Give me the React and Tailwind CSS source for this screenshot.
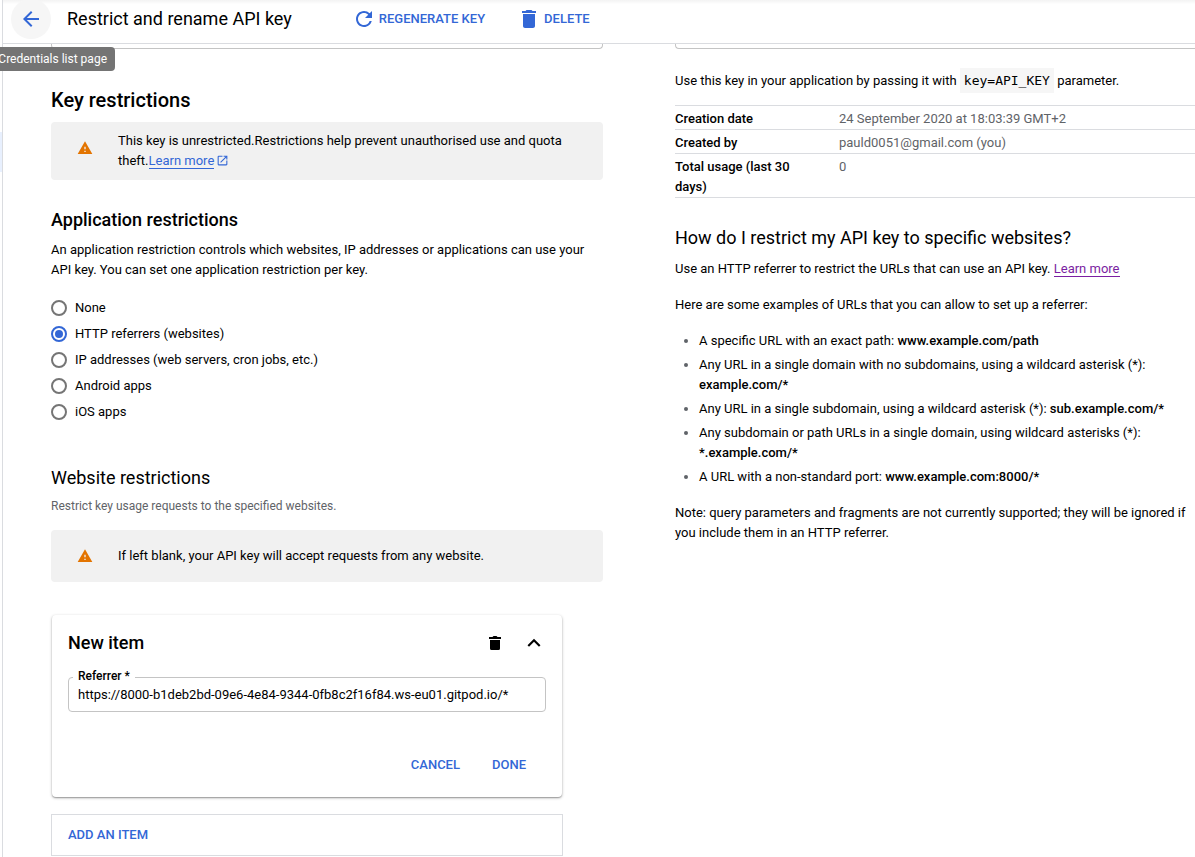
import { useState } from 'react';
import { MdArrowBack, MdDelete, MdExpandLess, MdOpenInNew, MdRefresh, MdWarning } from 'react-icons/md';

const restrictionTypes = [
  'None',
  'HTTP referrers (websites)',
  'IP addresses (web servers, cron jobs, etc.)',
  'Android apps',
  'iOS apps',
];

const details = [
  ['Creation date', '24 September 2020 at 18:03:39 GMT+2'],
  ['Created by', 'pauld0051@gmail.com (you)'],
  ['Total usage (last 30 days)', '0'],
];

const examples = [
  ['A specific URL with an exact path:', 'www.example.com/path'],
  ['Any URL in a single domain with no subdomains, using a wildcard asterisk (*):', 'example.com/*'],
  ['Any URL in a single subdomain, using a wildcard asterisk (*):', 'sub.example.com/*'],
  ['Any subdomain or path URLs in a single domain, using wildcard asterisks (*):', '*.example.com/*'],
  ['A URL with a non-standard port:', 'www.example.com:8000/*'],
];

function Header() {
  return (
    <header className="flex h-11 items-center border-b border-[#dadce0] bg-linear-to-b from-[#f3f3f3] to-white to-10% pb-[6px] pl-2">
      <div className="relative flex">
        <button
          type="button"
          aria-label="Back"
          aria-describedby="back-tip"
          className="flex size-10 items-center justify-center rounded-full bg-[#f6f6f6] text-[#3367d6]"
        >
          <MdArrowBack size={24} />
        </button>
        <span
          id="back-tip"
          role="tooltip"
          className="absolute top-12 right-[-64px] rounded-r bg-[#747474] py-1 pr-2 pl-2 text-[12px] leading-4 whitespace-nowrap text-white"
        >
          Credentials list page
        </span>
      </div>
      <h1 className="ml-4 text-[18px] leading-6">Restrict and rename API key</h1>
      <button type="button" className="ml-15 flex items-center gap-[3px] text-[13px] font-medium text-[#3367d6]">
        <MdRefresh size={24} />
        REGENERATE KEY
      </button>
      <button type="button" className="ml-8 flex items-center gap-[3px] text-[13px] font-medium text-[#3367d6]">
        <MdDelete size={24} />
        DELETE
      </button>
    </header>
  );
}

function Notice({ children, className }) {
  return (
    <div role="note" className={`flex items-start rounded bg-[#f1f1f1] pr-8 pl-[26px] ${className}`}>
      <MdWarning size={16} className="mt-[18px] shrink-0 text-[#e37400]" />
      <p className="ml-[25px] self-center">{children}</p>
    </div>
  );
}

function ReferrerCard() {
  const [referrer, setReferrer] = useState('https://8000-b1deb2bd-09e6-4e84-9344-0fb8c2f16f84.ws-eu01.gitpod.io/*');
  return (
    <section className="mt-[33px] mr-[41px] ml-px rounded bg-white p-4 shadow-[0_1px_3px_rgba(0,0,0,0.3),0_1px_1px_rgba(0,0,0,0.2)]">
      <div className="flex h-6 items-center">
        <h3 className="mr-auto text-[18px] leading-6 font-medium">New item</h3>
        <button type="button" aria-label="Delete item" className="mr-4">
          <svg viewBox="0 0 12 14" width="12" height="14" fill="currentColor" className="mx-1">
            <path d="M0 1h3.500l1-1h3l1 1H12v2H0zM1 4h10v8.500A1.500 1.500 0 0 1 9.500 14h-7A1.500 1.500 0 0 1 1 12.500z" />
          </svg>
        </button>
        <button type="button" aria-label="Collapse item" className="-mr-px">
          <MdExpandLess size={26} />
        </button>
      </div>
      <div className="relative mt-[22px]">
        <label
          htmlFor="referrer"
          className="absolute -top-[7px] left-[5px] bg-white px-[5px] text-[12px] leading-3 font-medium"
        >
          Referrer *
        </label>
        <input
          id="referrer"
          type="text"
          value={referrer}
          onChange={(e) => setReferrer(e.target.value)}
          className="block h-[35px] w-full rounded border border-[#c4c4c4] px-[9px] outline-none"
        />
      </div>
      <div className="mt-[43px] mb-[6px] flex justify-end gap-8 pr-5 font-medium text-[#3367d6]">
        <button type="button">CANCEL</button>
        <button type="button">DONE</button>
      </div>
    </section>
  );
}

function RestrictionsForm() {
  const [selected, setSelected] = useState(restrictionTypes[1]);
  return (
    <form>
      <div className="h-[5px] rounded-b border border-t-0 border-[#c4c4c4]" />
      <h2 className="mt-[39px] text-[20px] leading-6 font-medium">Key restrictions</h2>
      <Notice className="mt-[10px] min-h-[58px]">
        This key is unrestricted.Restrictions help prevent unauthorised use and quota theft.
        <a href="#keys" className="text-[#3367d6]">
          <span className="border-b border-current">Learn more</span>
          <MdOpenInNew size={13} className="ml-0.5 inline align-[-2px]" />
        </a>
      </Notice>
      <fieldset className="mt-7">
        <legend className="text-[18px] leading-6 font-medium">Application restrictions</legend>
        <p className="mt-2">
          An application restriction controls which websites, IP addresses or applications can use your API key. You can
          set one application restriction per key.
        </p>
        <div className="mt-[15px] flex flex-col items-start">
          {restrictionTypes.map((type) => (
            <label key={type} className="flex h-[26px] items-center gap-2">
              <input
                type="radio"
                name="restriction"
                checked={selected === type}
                onChange={() => setSelected(type)}
                className="size-4 appearance-none rounded-full border-2 border-[#757575] checked:border-[#3367d6] checked:bg-[#3367d6] checked:bg-clip-content checked:p-[2px]"
              />
              {type}
            </label>
          ))}
        </div>
      </fieldset>
      <h2 className="mt-[41px] text-[18px] leading-6">Website restrictions</h2>
      <p className="mt-[6px] text-[12px] text-[#5f6368]">Restrict key usage requests to the specified websites.</p>
      <Notice className="mt-[14px] min-h-[52px]">
        If left blank, your API key will accept requests from any website.
      </Notice>
      <ReferrerCard />
      <button
        type="button"
        className="mt-[17px] flex h-[42px] w-[calc(100%-40px)] items-center border border-[#dadce0] px-4 font-medium text-[#3367d6]"
      >
        ADD AN ITEM
      </button>
    </form>
  );
}

function InfoPanel() {
  return (
    <aside>
      <div className="h-[5px] rounded-bl border-b border-l border-[#c4c4c4]" />
      <p className="mt-[22px]">
        Use this key in your application by passing it with{' '}
        <code className="bg-[#f6f6f6] px-1 py-[5px] font-['DejaVu_Sans_Mono',monospace]">key=API_KEY</code> parameter.
      </p>
      <table className="mt-[14px] w-full border-t border-[#dadce0] text-left">
        <tbody>
          {details.map(([name, value]) => (
            <tr key={name} className="border-b border-[#dadce0] align-top">
              <th scope="row" className="w-[164px] pt-[3px] pr-8 font-medium">
                {name}
              </th>
              <td className="pt-[3px] text-[#5f6368]">{value}</td>
            </tr>
          ))}
        </tbody>
      </table>
      <h2 className="mt-7 text-[18px] leading-6">How do I restrict my API key to specific websites?</h2>
      <p className="mt-[9px]">
        Use an HTTP referrer to restrict the URLs that can use an API key.{' '}
        <a href="#referrers" className="border-b border-current text-[#7b1fa2]">
          Learn more
        </a>
      </p>
      <p className="mt-4">Here are some examples of URLs that you can allow to set up a referrer:</p>
      <ul className="mt-4 flex list-disc flex-col gap-1 pl-6 marker:text-[#5f6368]">
        {examples.map(([text, url]) => (
          <li key={url}>
            {text} <b className="font-medium">{url}</b>
          </li>
        ))}
      </ul>
      <p className="mt-4 pr-2">
        Note: query parameters and fragments are not currently supported; they will be ignored if you include them in an
        HTTP referrer.
      </p>
    </aside>
  );
}

export default function App() {
  return (
    <div className="flex min-h-screen overflow-hidden bg-white font-[Roboto,sans-serif] text-[13px] leading-5 text-black">
      <div className="w-[3px] shrink-0 border-r border-[#dadce0] pt-33">
        <div className="h-10 bg-[#e8f0fe]" />
      </div>
      <div className="min-w-0 flex-1">
        <Header />
        <main className="grid grid-cols-[552fr_520fr] gap-x-18 pl-12">
          <RestrictionsForm />
          <InfoPanel />
        </main>
      </div>
    </div>
  );
}
